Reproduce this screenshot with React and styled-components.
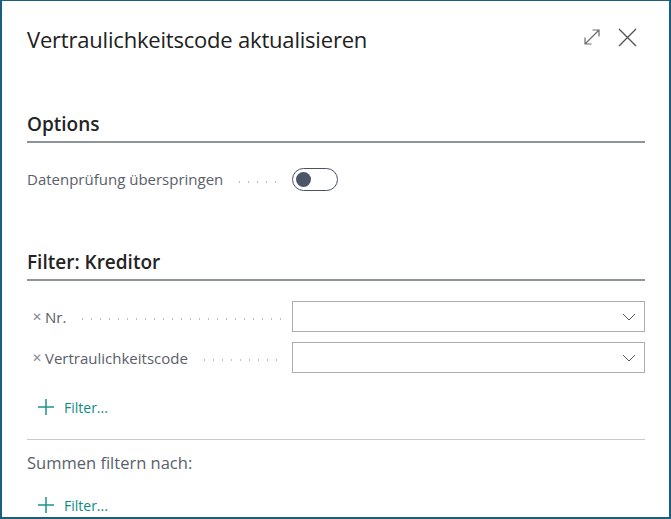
import React from "react";
import styled, { createGlobalStyle } from "styled-components";

const Global = createGlobalStyle`
  html, body { margin: 0; padding: 0; background: #fff; }
  body { font-family: "Open Sans", "Noto Sans", sans-serif; }
  * { box-sizing: border-box; }
`;

const Dialog = styled.div`
  width: 671px;
  height: 519px;
  border: 2px solid #1b5f7e;
  border-top-width: 1px;
  background: #fff;
  overflow: hidden;
  display: flex;
  flex-direction: column;
  padding: 0 24px 0 25px;
`;

const Header = styled.div`
  display: flex;
  align-items: center;
  justify-content: space-between;
  height: 76px;
`;

const Title = styled.h1`
  margin: 0;
  font-size: 22px;
  font-weight: 400;
  color: #212121;
  letter-spacing: -0.2px;
`;

const HeaderIcons = styled.div`
  display: flex;
  align-items: center;
  gap: 17px;
  margin-right: 8px;
  margin-top: -3px;
`;

const Section = styled.div`
  display: flex;
  flex-direction: column;
  margin-top: ${(p) => p.$top || 0}px;
`;

const SectionTitle = styled.h2`
  margin: 0;
  font-size: 19px;
  font-weight: 600;
  color: #242424;
  padding-bottom: 4px;
  border-bottom: 2px solid #8d939b;
  line-height: 26px;
`;

const FieldRow = styled.div`
  display: flex;
  align-items: center;
  height: ${(p) => p.$h || 30}px;
  margin-top: ${(p) => p.$top || 0}px;
`;

const Label = styled.div`
  width: 265px;
  display: flex;
  align-items: center;
  font-size: 15px;
  color: #59606a;
  white-space: nowrap;
  overflow: hidden;
`;

const Remove = styled.span`
  font-size: 12px;
  color: #8a8f96;
  margin: 0 3px 0 5px;
`;

const Dots = styled.span`
  flex: 1;
  margin: 5px 8px 0 12px;
  height: 2px;
  background-image: radial-gradient(circle, #b9bdc2 0.8px, transparent 1.1px);
  background-size: 9px 2px;
  background-repeat: repeat-x;
`;

const Toggle = styled.div`
  width: 46px;
  height: 23px;
  border: 1.5px solid #4a5262;
  border-radius: 12px;
  display: flex;
  align-items: center;
  padding-left: 3px;
  &::after {
    content: "";
    width: 15px;
    height: 15px;
    border-radius: 50%;
    background: #4a5568;
  }
`;

const Select = styled.div`
  flex: 1;
  height: 31px;
  border: 1px solid #a9adb3;
  display: flex;
  align-items: center;
  justify-content: flex-end;
  padding-right: 8px;
`;

const AddFilter = styled.div`
  display: flex;
  align-items: center;
  gap: 9px;
  color: #0e8a86;
  font-size: 14px;
  margin-left: 10px;
  height: 24px;
`;

const Divider = styled.hr`
  border: none;
  border-top: 1px solid #c8cbcf;
  margin: 0;
`;

const Plain = styled.div`
  font-size: 16.5px;
  color: #59606a;
`;

const Chevron = () => (
  <svg width="14" height="8" viewBox="0 0 14 8">
    <path d="M1 1l6 6 6-6" fill="none" stroke="#5a5a5a" strokeWidth="1" />
  </svg>
);

const Plus = () => (
  <svg width="18" height="18" viewBox="0 0 18 18">
    <path d="M9 1v16M1 9h16" stroke="#1e918c" strokeWidth="1.5" fill="none" />
  </svg>
);

export default function App() {
  return (
    <>
      <Global />
      <Dialog>
        <Header>
          <Title>Vertraulichkeitscode aktualisieren</Title>
          <HeaderIcons>
            <svg width="18" height="18" viewBox="0 0 18 18">
              <path d="M2 16L16 2M9.5 2H16V8.5M2 9.5V16H8.5" fill="none" stroke="#6b6b6b" strokeWidth="1.2" />
            </svg>
            <svg width="19" height="19" viewBox="0 0 19 19">
              <path d="M1 1l17 17M18 1L1 18" fill="none" stroke="#555" strokeWidth="1.4" />
            </svg>
          </HeaderIcons>
        </Header>

        <Section $top={35}>
          <SectionTitle>Options</SectionTitle>
          <FieldRow $top={22} $h={28}>
            <Label>
              Datenprüfung überspringen
              <Dots />
            </Label>
            <Toggle />
          </FieldRow>
        </Section>

        <Section $top={56}>
          <SectionTitle>Filter: Kreditor</SectionTitle>
          <FieldRow $top={20} $h={31}>
            <Label>
              <Remove>✕</Remove>Nr.
              <Dots />
            </Label>
            <Select><Chevron /></Select>
          </FieldRow>
          <FieldRow $top={10} $h={31}>
            <Label>
              <Remove>✕</Remove>Vertraulichkeitscode
              <Dots />
            </Label>
            <Select><Chevron /></Select>
          </FieldRow>
          <FieldRow $top={22} $h={24}>
            <AddFilter><Plus />Filter...</AddFilter>
          </FieldRow>
        </Section>

        <Section $top={20}>
          <Divider />
          <FieldRow $top={10} $h={24}>
            <Plain>Summen filtern nach:</Plain>
          </FieldRow>
          <FieldRow $top={19} $h={24}>
            <AddFilter><Plus />Filter...</AddFilter>
          </FieldRow>
        </Section>
      </Dialog>
    </>
  );
}
